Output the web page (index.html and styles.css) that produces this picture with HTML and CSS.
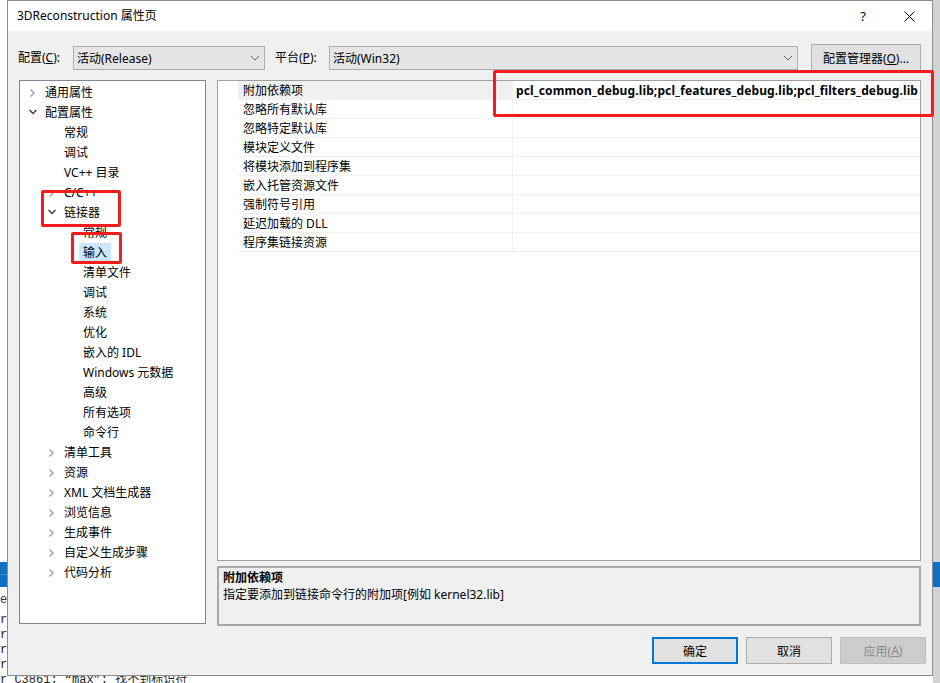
FILE: index.html
```html
<!DOCTYPE html>
<html lang="zh-CN">
<head>
<meta charset="utf-8">
<title>3DReconstruction 属性页</title>
<link rel="stylesheet" href="styles.css">
</head>
<body>
<div class="vs">
  <div class="vs-top"></div>
  <div class="vs-bar"><span class="vs-dots">· · ·</span></div>
  <div class="vs-head">e</div>
  <div class="vs-line">r</div>
  <div class="vs-line">r</div>
  <div class="vs-line">r</div>
  <div class="vs-line">r</div>
  <div class="vs-line">r C3861: “max”: 找不到标识符</div>
</div>

<div class="dialog">
  <div class="titlebar">
    <span class="title">3DReconstruction 属性页</span>
    <span class="tb-btn help">?</span>
    <span class="tb-btn close">
      <svg width="11" height="11" viewBox="0 0 11 11"><path d="M0.5 0.5 L10.5 10.5 M10.5 0.5 L0.5 10.5" stroke="#000" stroke-width="1" fill="none"/></svg>
    </span>
  </div>

  <div class="content">
    <div class="config-row">
      <span class="lbl lbl-config">配置(<u>C</u>):</span>
      <div class="combo combo-config">
        <span>活动(Release)</span>
        <svg class="chev" width="10" height="6" viewBox="0 0 10 6"><polyline points="1,1 5,5 9,1" fill="none" stroke="#606060" stroke-width="1"/></svg>
      </div>
      <span class="lbl lbl-platform">平台(<u>P</u>):</span>
      <div class="combo combo-platform">
        <span>活动(Win32)</span>
        <svg class="chev" width="10" height="6" viewBox="0 0 10 6"><polyline points="1,1 5,5 9,1" fill="none" stroke="#606060" stroke-width="1"/></svg>
      </div>
      <div class="btn btn-manager">配置管理器(<u>O</u>)...</div>
    </div>

    <div class="main">
      <div class="tree">
        <div class="node l0"><span class="arrow"><svg width="14" height="20" viewBox="0 0 14 20"><polyline points="3.5,7.5 7,11 3.5,14.5" fill="none" stroke="#a6a6a6" stroke-width="1.5"/></svg></span><span class="txt">通用属性</span></div>
        <div class="node l0"><span class="arrow"><svg width="14" height="20" viewBox="0 0 14 20"><polyline points="2.5,8 6,11.5 9.5,8" fill="none" stroke="#404040" stroke-width="1.5"/></svg></span><span class="txt">配置属性</span></div>
        <div class="node l1"><span class="arrow"></span><span class="txt">常规</span></div>
        <div class="node l1"><span class="arrow"></span><span class="txt">调试</span></div>
        <div class="node l1"><span class="arrow"></span><span class="txt">VC++ 目录</span></div>
        <div class="node l1"><span class="arrow"><svg width="14" height="20" viewBox="0 0 14 20"><polyline points="3.5,7.5 7,11 3.5,14.5" fill="none" stroke="#a6a6a6" stroke-width="1.5"/></svg></span><span class="txt">C/C++</span></div>
        <div class="node l1"><span class="arrow"><svg width="14" height="20" viewBox="0 0 14 20"><polyline points="2.5,8 6,11.5 9.5,8" fill="none" stroke="#404040" stroke-width="1.5"/></svg></span><span class="txt">链接器</span></div>
        <div class="node l2"><span class="arrow"></span><span class="txt">常规</span></div>
        <div class="node l2"><span class="arrow"></span><span class="txt selected">输入</span></div>
        <div class="node l2"><span class="arrow"></span><span class="txt">清单文件</span></div>
        <div class="node l2"><span class="arrow"></span><span class="txt">调试</span></div>
        <div class="node l2"><span class="arrow"></span><span class="txt">系统</span></div>
        <div class="node l2"><span class="arrow"></span><span class="txt">优化</span></div>
        <div class="node l2"><span class="arrow"></span><span class="txt">嵌入的 IDL</span></div>
        <div class="node l2"><span class="arrow"></span><span class="txt">Windows 元数据</span></div>
        <div class="node l2"><span class="arrow"></span><span class="txt">高级</span></div>
        <div class="node l2"><span class="arrow"></span><span class="txt">所有选项</span></div>
        <div class="node l2"><span class="arrow"></span><span class="txt">命令行</span></div>
        <div class="node l1"><span class="arrow"><svg width="14" height="20" viewBox="0 0 14 20"><polyline points="3.5,7.5 7,11 3.5,14.5" fill="none" stroke="#a6a6a6" stroke-width="1.5"/></svg></span><span class="txt">清单工具</span></div>
        <div class="node l1"><span class="arrow"><svg width="14" height="20" viewBox="0 0 14 20"><polyline points="3.5,7.5 7,11 3.5,14.5" fill="none" stroke="#a6a6a6" stroke-width="1.5"/></svg></span><span class="txt">资源</span></div>
        <div class="node l1"><span class="arrow"><svg width="14" height="20" viewBox="0 0 14 20"><polyline points="3.5,7.5 7,11 3.5,14.5" fill="none" stroke="#a6a6a6" stroke-width="1.5"/></svg></span><span class="txt">XML 文档生成器</span></div>
        <div class="node l1"><span class="arrow"><svg width="14" height="20" viewBox="0 0 14 20"><polyline points="3.5,7.5 7,11 3.5,14.5" fill="none" stroke="#a6a6a6" stroke-width="1.5"/></svg></span><span class="txt">浏览信息</span></div>
        <div class="node l1"><span class="arrow"><svg width="14" height="20" viewBox="0 0 14 20"><polyline points="3.5,7.5 7,11 3.5,14.5" fill="none" stroke="#a6a6a6" stroke-width="1.5"/></svg></span><span class="txt">生成事件</span></div>
        <div class="node l1"><span class="arrow"><svg width="14" height="20" viewBox="0 0 14 20"><polyline points="3.5,7.5 7,11 3.5,14.5" fill="none" stroke="#a6a6a6" stroke-width="1.5"/></svg></span><span class="txt">自定义生成步骤</span></div>
        <div class="node l1"><span class="arrow"><svg width="14" height="20" viewBox="0 0 14 20"><polyline points="3.5,7.5 7,11 3.5,14.5" fill="none" stroke="#a6a6a6" stroke-width="1.5"/></svg></span><span class="txt">代码分析</span></div>
      </div>

      <div class="right">
        <div class="grid">
          <div class="row active"><span class="gutter"></span><span class="name">附加依赖项</span><span class="value">pcl_common_debug.lib;pcl_features_debug.lib;pcl_filters_debug.lib</span></div>
          <div class="row"><span class="gutter"></span><span class="name">忽略所有默认库</span><span class="value"></span></div>
          <div class="row"><span class="gutter"></span><span class="name">忽略特定默认库</span><span class="value"></span></div>
          <div class="row"><span class="gutter"></span><span class="name">模块定义文件</span><span class="value"></span></div>
          <div class="row"><span class="gutter"></span><span class="name">将模块添加到程序集</span><span class="value"></span></div>
          <div class="row"><span class="gutter"></span><span class="name">嵌入托管资源文件</span><span class="value"></span></div>
          <div class="row"><span class="gutter"></span><span class="name">强制符号引用</span><span class="value"></span></div>
          <div class="row"><span class="gutter"></span><span class="name">延迟加载的 DLL</span><span class="value"></span></div>
          <div class="row"><span class="gutter"></span><span class="name">程序集链接资源</span><span class="value"></span></div>
        </div>
        <div class="desc">
          <div class="desc-title">附加依赖项</div>
          <div class="desc-text">指定要添加到链接命令行的附加项[例如 kernel32.lib]</div>
        </div>
      </div>
    </div>

    <div class="buttons">
      <div class="btn btn-ok">确定</div>
      <div class="btn">取消</div>
      <div class="btn btn-disabled">应用(<u>A</u>)</div>
    </div>
  </div>
</div>

<div class="mark mark-value"></div>
<div class="mark mark-linker"></div>
<div class="mark mark-input"></div>
</body>
</html>
```

FILE: styles.css
```css
* { box-sizing: border-box; }

html, body {
  margin: 0;
  padding: 0;
}

body {
  position: relative;
  width: 940px;
  height: 683px;
  overflow: hidden;
  background: #ffffff;
  font-family: "Noto Sans", "Noto Sans CJK SC", sans-serif;
  font-size: 12px;
  color: #000;
}

/* ---- background VS window ---- */
.vs {
  position: absolute;
  left: 0;
  top: 0;
  width: 940px;
  height: 683px;
  background: linear-gradient(to right, #ffffff 0, #ffffff 933px, #d2d2d2 933px);
  display: flex;
  flex-direction: column;
}
.vs-top { height: 562px; flex: none; }
.vs-bar {
  height: 25px;
  flex: none;
  background: #0f6fc2;
  color: #8fc0ea;
  font-size: 8px;
  line-height: 25px;
  padding-left: 1px;
  letter-spacing: -1px;
}
.vs-head {
  height: 26px;
  flex: none;
  line-height: 26px;
  font-family: "Liberation Mono", monospace;
  color: #333;
}
.vs-line {
  height: 15px;
  flex: none;
  line-height: 15px;
  font-family: "Liberation Mono", "Noto Sans CJK SC", monospace;
  font-size: 12px;
  color: #1e1e1e;
  white-space: nowrap;
}

/* ---- dialog ---- */
.dialog {
  position: absolute;
  left: 7px;
  top: 0;
  width: 926px;
  height: 676px;
  border: 1px solid #8c8c8c;
  background: #f0f0f0;
  display: flex;
  flex-direction: column;
}

.titlebar {
  height: 30px;
  flex: none;
  background: #ffffff;
  display: flex;
  align-items: center;
  padding-left: 9px;
}
.title {
  flex: 1;
  font-size: 12px;
  line-height: 30px;
  color: #000;
}
.tb-btn {
  width: 46px;
  height: 30px;
  display: flex;
  align-items: center;
  justify-content: center;
}
.help {
  font-size: 13px;
  color: #000;
}

.content {
  flex: 1;
  display: flex;
  flex-direction: column;
  padding: 0 11px;
}

/* ---- config row ---- */
.config-row {
  margin-top: 13px;
  height: 27px;
  display: flex;
  align-items: center;
}
.lbl {
  line-height: 24px;
  padding-top: 1px;
  white-space: nowrap;
}
.lbl-config { width: 55px; margin-left: -1px; }
.lbl-platform { width: 54px; margin-left: 10px; }

.combo {
  height: 24px;
  background: #e5e5e5;
  border: 1px solid #adadad;
  display: flex;
  align-items: center;
  justify-content: space-between;
  padding: 1px 4px 0 3px;
  line-height: 21px;
}
.combo-config { width: 192px; }
.combo-platform { width: 469px; }

.btn {
  height: 27px;
  background: #e1e1e1;
  border: 1px solid #adadad;
  display: flex;
  align-items: center;
  justify-content: center;
  white-space: nowrap;
}
.btn-manager {
  width: 110px;
  margin-left: auto;
  padding-top: 1px;
}

/* ---- main ---- */
.main {
  margin-top: 9px;
  height: 545px;
  display: flex;
  gap: 11px;
  align-items: flex-start;
}

.tree {
  width: 187px;
  height: 544px;
  flex: none;
  background: #ffffff;
  border: 1px solid #828790;
  padding-top: 1px;
}
.node {
  height: 20px;
  display: flex;
  align-items: center;
  line-height: 20px;
  white-space: nowrap;
}
.node.l0 { padding-left: 7px; }
.node.l1 { padding-left: 26px; }
.node.l2 { padding-left: 45px; }
.arrow {
  width: 14px;
  height: 20px;
  margin-right: 4px;
  flex: none;
  display: block;
}
.arrow svg { display: block; }
.txt { line-height: 18px; padding-top: 1px; }
.txt.selected {
  background: #cce8ff;
  padding: 1px 4px 0 4px;
  margin-left: -4px;
}

.right {
  width: 704px;
  flex: none;
  display: flex;
  flex-direction: column;
  gap: 5px;
}

.grid {
  height: 481px;
  background: #ffffff;
  border: 1px solid #a0a0a0;
  overflow: hidden;
}
.row {
  display: grid;
  grid-template-columns: 20px 274px 1fr;
  height: 19px;
}
.row .gutter { background: #ffffff; }
.row .name {
  padding: 2px 0 0 5px;
  line-height: 16px;
  border-bottom: 1px solid #f0f0f0;
  white-space: nowrap;
}
.row .value {
  border-left: 1px solid #f0f0f0;
  border-bottom: 1px solid #f0f0f0;
  padding: 2px 0 0 3px;
  line-height: 16px;
  white-space: nowrap;
  overflow: hidden;
  font-weight: 700;
  letter-spacing: 0.12px;
}
.row.active .name { background: #f0f0f0; }

.desc {
  height: 60px;
  border: 2px solid #a8a8a8;
  background: #f0f0f0;
  padding: 1px 4px 0 4px;
}
.desc-title {
  font-weight: 700;
  line-height: 17px;
}
.desc-text {
  line-height: 17px;
}

/* ---- buttons ---- */
.buttons {
  margin-top: 12px;
  margin-right: -5px;
  display: flex;
  justify-content: flex-end;
  gap: 8px;
}
.buttons .btn { width: 86px; }
.btn-ok { border: 2px solid #0078d7; }
.btn-disabled {
  background: #cccccc;
  border-color: #bfbfbf;
  color: #8a8a8a;
}

/* ---- red annotations ---- */
.mark {
  position: absolute;
  border: 3px solid #f21c1c;
  border-radius: 2px;
}
.mark-value { left: 493px; top: 70px; width: 441px; height: 47px; }
.mark-linker { left: 41px; top: 190px; width: 80px; height: 37px; }
.mark-input { left: 71px; top: 232px; width: 51px; height: 32px; }
```
